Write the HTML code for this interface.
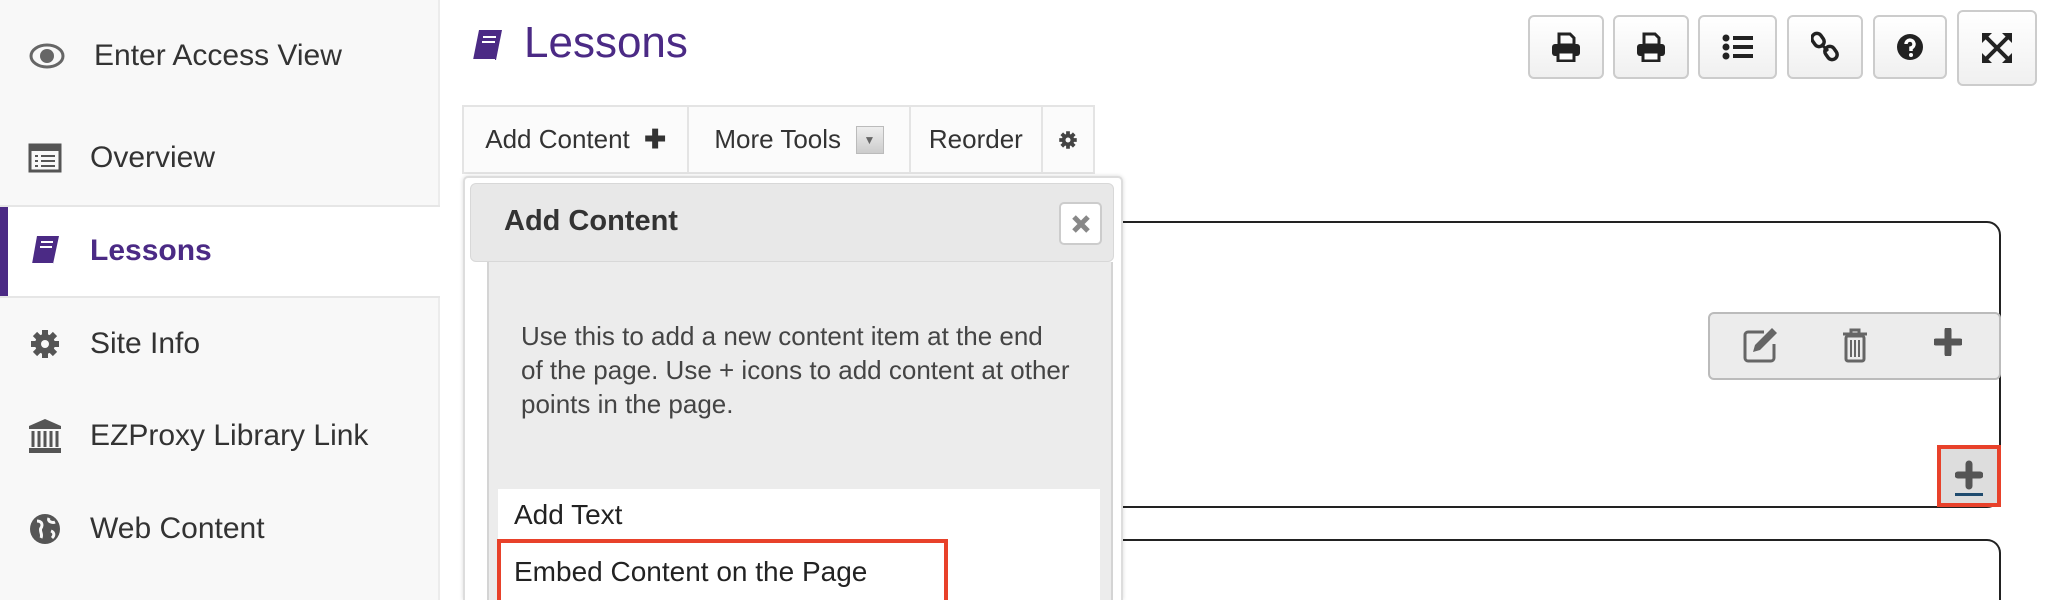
<!DOCTYPE html>
<html><head><meta charset="utf-8"><style>
*{box-sizing:border-box;margin:0;padding:0}
html,body{width:2046px;height:600px;overflow:hidden;background:#fff}
body{font-family:"Liberation Sans",sans-serif}
#wrap{position:relative;width:2046px;height:600px;overflow:hidden}
.abs{position:absolute}
.side{left:0;top:0;width:440px;height:600px;background:#f8f8f8;border-right:2px solid #ececec}
.item{position:absolute;left:0;width:440px;font-size:30px;color:#333;display:flex;align-items:center}
.item .ic{width:90px;display:flex;justify-content:center;align-items:center}
.tb{left:462px;top:105px;height:69px;width:633px;border:2px solid #e4e4e4;background:#fbfbfb;display:flex;font-size:26px;color:#333}
.tb div{display:flex;align-items:center;justify-content:center;border-right:2px solid #e4e4e4;height:100%}
.btn{position:absolute;top:15px;height:64px;border:2px solid #ccc;border-radius:6px;background:linear-gradient(#fff,#f0f0f0);display:flex;align-items:center;justify-content:center}
</style></head><body><div id="wrap">
<div class="abs side">
  <div class="item" style="top:30px;height:52px"><div class="ic" style="width:94px"><svg width="36" height="28" viewBox="0 0 36 28"><ellipse cx="18" cy="14" rx="16" ry="11" fill="none" stroke="#666" stroke-width="3"/><circle cx="18" cy="14" r="7" fill="#666"/></svg></div>Enter Access View</div>
  <div class="item" style="top:132px;height:52px"><div class="ic"><svg width="34" height="30" viewBox="0 0 34 30"><rect x="2" y="2" width="30" height="26" fill="none" stroke="#555" stroke-width="3"/><rect x="2" y="2" width="30" height="6" fill="#555"/><path d="M7 13h3M13 13h14M7 18h3M13 18h14M7 23h3M13 23h14" stroke="#555" stroke-width="2"/></svg></div>Overview</div>
  <div class="abs" style="left:0;top:205px;width:440px;height:2px;background:#e6e6e6"></div>
  <div class="abs" style="left:0;top:207px;width:440px;height:89px;background:#fff"></div>
  <div class="abs" style="left:0;top:207px;width:8px;height:89px;background:#4b2a85"></div>
  <div class="item" style="top:225px;height:52px;color:#4b2a85;font-weight:bold"><div class="ic"><svg width="34" height="34" viewBox="0 0 34 34"><path d="M9 2h22l-6 28H4z" fill="#4b2a85"/><path d="M4 30h21" stroke="#fff" stroke-width="2"/><path d="M13 8h12M12 13h12" stroke="#fff" stroke-width="2"/></svg></div>Lessons</div>
  <div class="abs" style="left:0;top:296px;width:440px;height:2px;background:#e6e6e6"></div>
  <div class="item" style="top:318px;height:52px"><div class="ic"><svg width="32" height="32" viewBox="0 0 32 32"><circle cx="16" cy="16" r="10" fill="#555"/><path d="M16 2v28M2 16h28M6 6l20 20M26 6L6 26" stroke="#555" stroke-width="6"/><circle cx="16" cy="16" r="4" fill="#f8f8f8"/></svg></div>Site Info</div>
  <div class="item" style="top:410px;height:52px"><div class="ic"><svg width="36" height="36" viewBox="0 0 36 36"><path d="M18 1L2 8v3h32V8z" fill="#555"/><path d="M6 13v16M12 13v16M18 13v16M24 13v16M30 13v16" stroke="#555" stroke-width="3"/><rect x="2" y="30" width="32" height="5" fill="#555"/></svg></div>EZProxy Library Link</div>
  <div class="item" style="top:503px;height:52px"><div class="ic"><svg width="32" height="32" viewBox="0 0 32 32"><circle cx="16" cy="16" r="15" fill="#555"/><path d="M8 8c5 0 6 4 4 7s2 6 0 10M20 5c-2 4 4 5 6 4M22 18c3 1 4 4 1 7" stroke="#f8f8f8" stroke-width="3" fill="none"/></svg></div>Web Content</div>
</div>

<svg class="abs" style="left:470px;top:28px" width="34" height="36" viewBox="0 0 34 36"><path d="M9 2h23l-6 30H3z" fill="#4b2a85"/><path d="M3 32h22" stroke="#fff" stroke-width="2"/><path d="M13 9h13M12 14h13" stroke="#fff" stroke-width="2"/></svg>
<div class="abs" style="left:524px;top:18px;font-size:44px;color:#4b2a85">Lessons</div>

<div class="abs tb">
  <div style="width:226px">Add Content&nbsp;&nbsp;<b>✚</b></div>
  <div style="width:222px">More Tools&nbsp;&nbsp;<span style="display:inline-block;width:28px;height:28px;background:linear-gradient(#eee,#ccc);border:1px solid #bbb;font-size:12px;color:#666;text-align:center;line-height:26px">▼</span></div>
  <div style="width:133px">Reorder</div>
  <div style="width:50px;border-right:none"><svg width="20" height="20" viewBox="0 0 32 32"><circle cx="16" cy="16" r="10" fill="#444"/><path d="M16 2v28M2 16h28M6 6l20 20M26 6L6 26" stroke="#444" stroke-width="6"/><circle cx="16" cy="16" r="4" fill="#fbfbfb"/></svg></div>
</div>

<div class="abs" style="left:1000px;top:221px;width:1001px;height:287px;border:2px solid #222;border-radius:14px"></div>
<div class="abs" style="left:1000px;top:539px;width:1001px;height:61px;border:2px solid #222;border-bottom:none;border-radius:14px 14px 0 0"></div>
<div class="abs" style="left:1708px;top:312px;width:293px;height:68px;background:#ececec;border:2px solid #bbb;border-radius:6px"></div>
<svg class="abs" style="left:1742px;top:326px" width="38" height="38" viewBox="0 0 38 38"><path d="M22 6H6a3 3 0 0 0-3 3v23a3 3 0 0 0 3 3h23a3 3 0 0 0 3-3V18" fill="none" stroke="#666" stroke-width="3"/><path d="M30 2l5 5-17 17-7 2 2-7z" fill="#666"/></svg>
<svg class="abs" style="left:1841px;top:327px" width="28" height="36" viewBox="0 0 28 36"><path d="M2 7h24M10 7V3h8v4" stroke="#666" stroke-width="3" fill="none"/><rect x="5" y="9" width="18" height="25" rx="2" fill="none" stroke="#666" stroke-width="3"/><path d="M10 13v17M14 13v17M18 13v17" stroke="#666" stroke-width="2"/></svg>
<svg class="abs" style="left:1934px;top:328px" width="28" height="28" viewBox="0 0 28 28"><path d="M14 2v24M2 14h24" stroke="#555" stroke-width="7" stroke-linecap="round"/></svg>
<div class="abs" style="left:1937px;top:445px;width:64px;height:62px;border:4px solid #e8412a;background:#ddd"></div>
<svg class="abs" style="left:1955px;top:460px" width="28" height="38" viewBox="0 0 28 38"><path d="M14 4v22M3 15h22" stroke="#555" stroke-width="7" stroke-linecap="round"/><rect x="0" y="33" width="28" height="3" fill="#1f4b6e"/></svg>

<div class="btn" style="left:1528px;width:76px"><svg width="30" height="30" viewBox="0 0 30 30"><path d="M8 2h11l4 4v7H8z" fill="none" stroke="#222" stroke-width="3"/><rect x="1" y="12" width="28" height="12" rx="3" fill="#222"/><rect x="7" y="20" width="16" height="9" fill="#fff" stroke="#222" stroke-width="3"/></svg></div>
<div class="btn" style="left:1613px;width:76px"><svg width="30" height="30" viewBox="0 0 30 30"><path d="M8 2h11l4 4v7H8z" fill="none" stroke="#222" stroke-width="3"/><rect x="1" y="12" width="28" height="12" rx="3" fill="#222"/><rect x="7" y="20" width="16" height="9" fill="#fff" stroke="#222" stroke-width="3"/></svg></div>
<div class="btn" style="left:1698px;width:79px"><svg width="32" height="26" viewBox="0 0 32 26"><circle cx="4" cy="4" r="3.5" fill="#222"/><circle cx="4" cy="13" r="3.5" fill="#222"/><circle cx="4" cy="22" r="3.5" fill="#222"/><path d="M11 4h20M11 13h20M11 22h20" stroke="#222" stroke-width="4"/></svg></div>
<div class="btn" style="left:1787px;width:76px"><svg width="28" height="32" viewBox="0 0 28 32"><rect x="2" y="2" width="10" height="14" rx="5" transform="rotate(-35 7 9)" fill="none" stroke="#222" stroke-width="3.5"/><rect x="15" y="15" width="10" height="14" rx="5" transform="rotate(-35 20 22)" fill="none" stroke="#222" stroke-width="3.5"/><path d="M10 13l7 7" stroke="#222" stroke-width="3"/></svg></div>
<div class="btn" style="left:1873px;width:74px"><svg width="28" height="28" viewBox="0 0 28 28"><circle cx="14" cy="14" r="13" fill="#222"/><path d="M10 11a4 4 0 1 1 5 4v3" stroke="#fff" stroke-width="3.5" fill="none"/><circle cx="15" cy="22" r="2" fill="#fff"/></svg></div>
<div class="btn" style="left:1957px;width:80px;top:10px;height:76px"><svg width="32" height="32" viewBox="0 0 32 32"><path d="M3 3l26 26M29 3L3 29" stroke="#222" stroke-width="4"/><path d="M1 1h10L1 11zM31 1H21l10 10zM1 31h10L1 21zM31 31H21l10-10z" fill="#222"/></svg></div>

<div class="abs" style="left:463px;top:176px;width:660px;height:424px;background:#fff;border:2px solid #ddd;border-bottom:none;border-radius:5px 5px 0 0;box-shadow:0 0 4px rgba(0,0,0,.15)"></div>
<div class="abs" style="left:470px;top:183px;width:644px;height:79px;background:#e8e8e8;border:1px solid #d8d8d8;border-radius:6px"></div>
<div class="abs" style="left:504px;top:205px;font-size:29px;font-weight:bold;color:#333">Add Content</div>
<div class="abs" style="left:1059px;top:202px;width:43px;height:43px;background:#fff;border:2px solid #ccc;border-radius:5px;display:flex;align-items:center;justify-content:center"><svg width="20" height="20" viewBox="0 0 20 20"><path d="M3 3l14 14M17 3L3 17" stroke="#888" stroke-width="5"/></svg></div>
<div class="abs" style="left:487px;top:262px;width:626px;height:338px;background:#ececec;border-left:2px solid #d4d4d4;border-right:2px solid #d4d4d4"></div>
<div class="abs" style="left:521px;top:319px;white-space:nowrap;font-size:26px;line-height:34px;color:#444">Use this to add a new content item at the end<br>of the page. Use + icons to add content at other<br>points in the page.</div>
<div class="abs" style="left:498px;top:489px;width:602px;height:111px;background:#fff"></div>
<div class="abs" style="left:514px;top:499px;font-size:28px;color:#222">Add Text</div>
<div class="abs" style="left:497px;top:539px;width:451px;height:61px;border:4px solid #e8412a;border-bottom:none"></div>
<div class="abs" style="left:514px;top:556px;font-size:28px;color:#222">Embed Content on the Page</div>
</div></body></html>
